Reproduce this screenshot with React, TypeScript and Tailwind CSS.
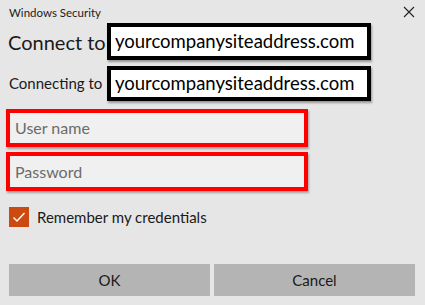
import React from "react";

const font = { fontFamily: 'Lato, "Open Sans", sans-serif' };

function SiteBox({ height }: { height: string }) {
  return (
    <div
      className={`w-[264px] shrink-0 ${height} border-4 border-black bg-white shadow-[1px_2px_2px_rgba(0,0,0,0.35)] flex items-center pl-[4px] text-[18.5px] text-black leading-none whitespace-nowrap overflow-hidden`}
    >
      yourcompanysiteaddress.com
    </div>
  );
}

function RedInput({ placeholder, className }: { placeholder: string; className: string }) {
  return (
    <div
      className={`ml-[6px] w-[302px] border-4 border-[#ff0000] bg-[#f0f0f0] shadow-[1px_2px_2px_rgba(0,0,0,0.3)] flex items-center pl-[5px] text-[16px] text-[#6b6b6b] ${className}`}
    >
      {placeholder}
    </div>
  );
}

export default function App() {
  return (
    <div
      className="w-[425px] h-[305px] bg-[#e6e6e6] flex flex-col text-[#1a1a1a] overflow-hidden"
      style={font}
    >
      <div className="flex justify-between items-start pl-[9px] pr-[10px] pt-[4px] h-[23px]">
        <span className="text-[11.5px]">Windows Security</span>
        <svg width="12" height="12" viewBox="0 0 12 12" className="mt-[2px]">
          <path d="M1 1 L11 11 M11 1 L1 11" stroke="#222" strokeWidth="1.1" />
        </svg>
      </div>

      <div className="flex items-center">
        <span className="w-[107px] shrink-0 pl-[8px] text-[20px] leading-none whitespace-nowrap">
          Connect to
        </span>
        <SiteBox height="h-[37px]" />
      </div>

      <div className="flex items-center mt-[6px]">
        <span className="w-[107px] shrink-0 pl-[9px] text-[15px] leading-none whitespace-nowrap">
          Connecting to
        </span>
        <SiteBox height="h-[35px]" />
      </div>

      <RedInput placeholder="User name" className="mt-[8px] h-[38px]" />
      <RedInput placeholder="Password" className="mt-[5px] h-[39px]" />

      <div className="flex items-center mt-[15px] pl-[9px]">
        <div className="w-[20px] h-[20px] bg-[#cc4a10] flex items-center justify-center">
          <svg width="14" height="14" viewBox="0 0 14 14">
            <path d="M1.5 7.5 L5 11 L12.5 3" stroke="white" strokeWidth="1.4" fill="none" />
          </svg>
        </div>
        <span className="ml-[8px] text-[15px]">Remember my credentials</span>
      </div>

      <div className="mt-auto mb-[9px] flex gap-[4px] pl-[9px] pr-[10px]">
        <button className="flex-1 h-[32px] bg-[#b4b4b4] text-[15px] text-[#1a1a1a]">OK</button>
        <button className="flex-1 h-[32px] bg-[#b4b4b4] text-[15px] text-[#1a1a1a]">Cancel</button>
      </div>
    </div>
  );
}
